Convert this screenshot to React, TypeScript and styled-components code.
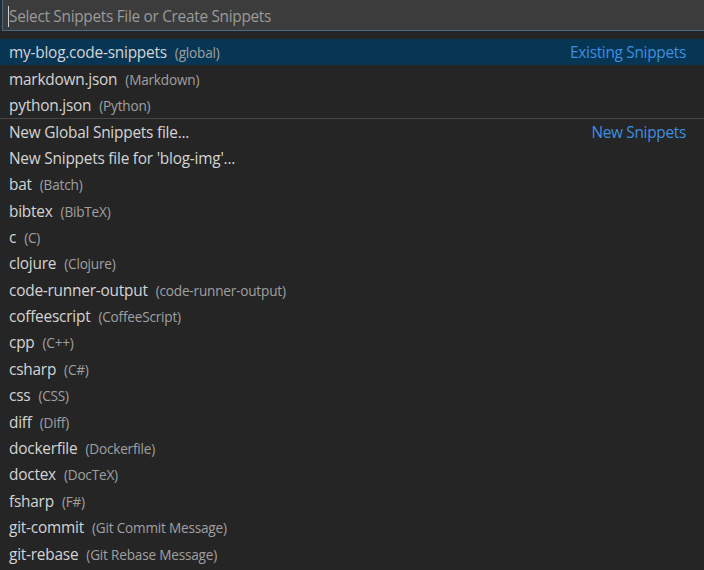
import React from "react";
import styled, { createGlobalStyle } from "styled-components";

const GlobalStyle = createGlobalStyle`
  html, body {
    margin: 0;
    padding: 0;
    background: #252526;
  }
  body {
    font-family: "Open Sans", "Noto Sans", "Liberation Sans", sans-serif;
    -webkit-font-smoothing: antialiased;
  }
`;

const Widget = styled.div`
  width: 704px;
  height: 570px;
  overflow: hidden;
  background: #252526;
  display: flex;
  flex-direction: column;
`;

const InputWrap = styled.div`
  padding: 0 0 0 2px;
  margin-top: -3px;
  background: #2b2b2c;
`;

const InputBox = styled.div`
  height: 34px;
  background: #3c3c3c;
  border: 1px solid #46698a;
  border-right: none;
  display: flex;
  align-items: center;
  padding: 4px 0 0 5px;
  box-sizing: border-box;
`;

const Caret = styled.span`
  display: inline-block;
  width: 1px;
  height: 21px;
  background: #cfcfcf;
`;

const Placeholder = styled.span`
  color: #9a9a9a;
  font-size: 15.4px;
  letter-spacing: -0.3px;
`;

const List = styled.div`
  margin-top: 8px;
  display: flex;
  flex-direction: column;
`;

const Row = styled.div<{ $selected?: boolean; $separator?: boolean }>`
  height: 26.4px;
  box-sizing: border-box;
  display: flex;
  align-items: center;
  padding: 1px 18px 0 9px;
  background: ${(p) => (p.$selected ? "#073655" : "transparent")};
  border-top: ${(p) => (p.$separator ? "1px solid #454545" : "none")};
  white-space: nowrap;
`;

const Label = styled.span`
  color: #d4d4d4;
  font-size: 15.4px;
  letter-spacing: -0.22px;
`;

const Description = styled.span`
  color: #a0a0a0;
  font-size: 13.6px;
  letter-spacing: -0.2px;
  margin-left: 8px;
`;

const Group = styled.span`
  margin-left: auto;
  color: #3d8fe0;
  font-size: 15.4px;
  letter-spacing: -0.3px;
`;

type Item = { label: string; desc?: string; group?: string; separator?: boolean };

const items: Item[] = [
  { label: "my-blog.code-snippets", desc: "(global)", group: "Existing Snippets" },
  { label: "markdown.json", desc: "(Markdown)" },
  { label: "python.json", desc: "(Python)" },
  { label: "New Global Snippets file...", group: "New Snippets", separator: true },
  { label: "New Snippets file for 'blog-img'..." },
  { label: "bat", desc: "(Batch)" },
  { label: "bibtex", desc: "(BibTeX)" },
  { label: "c", desc: "(C)" },
  { label: "clojure", desc: "(Clojure)" },
  { label: "code-runner-output", desc: "(code-runner-output)" },
  { label: "coffeescript", desc: "(CoffeeScript)" },
  { label: "cpp", desc: "(C++)" },
  { label: "csharp", desc: "(C#)" },
  { label: "css", desc: "(CSS)" },
  { label: "diff", desc: "(Diff)" },
  { label: "dockerfile", desc: "(Dockerfile)" },
  { label: "doctex", desc: "(DocTeX)" },
  { label: "fsharp", desc: "(F#)" },
  { label: "git-commit", desc: "(Git Commit Message)" },
  { label: "git-rebase", desc: "(Git Rebase Message)" },
];

const App: React.FC = () => {
  return (
    <>
      <GlobalStyle />
      <Widget>
        <InputWrap>
          <InputBox>
            <Caret />
            <Placeholder>Select Snippets File or Create Snippets</Placeholder>
          </InputBox>
        </InputWrap>
        <List>
          {items.map((it, i) => (
            <Row key={it.label} $selected={i === 0} $separator={it.separator}>
              <Label>{it.label}</Label>
              {it.desc && <Description>{it.desc}</Description>}
              {it.group && <Group>{it.group}</Group>}
            </Row>
          ))}
        </List>
      </Widget>
    </>
  );
};

export default App;
